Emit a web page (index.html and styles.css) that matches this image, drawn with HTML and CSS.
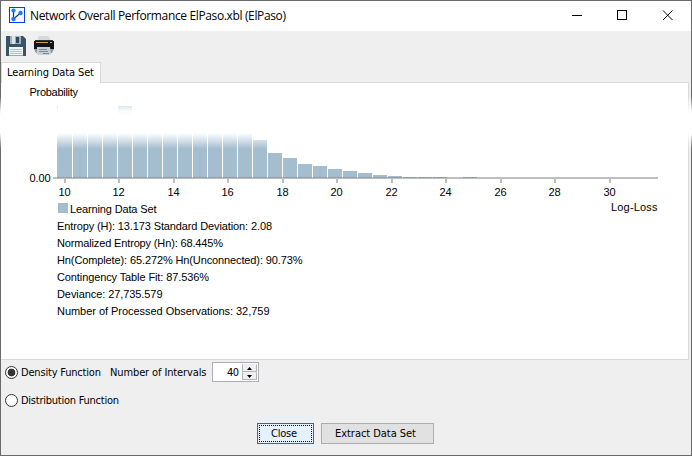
FILE: index.html
```
<!DOCTYPE html>
<html lang="en">
<head>
<meta charset="utf-8">
<title>Network Overall Performance ElPaso.xbl (ElPaso)</title>
<link rel="stylesheet" href="styles.css">
</head>
<body>
<div class="window">
  <header class="titlebar">
    <svg class="app-icon" width="16" height="16" viewBox="0 0 16 16">
      <rect x=".5" y=".5" width="15" height="15" fill="#f4f9ff" stroke="#0b3cf0"/>
      <path d="M4.500 3.500V12L11.500 6" fill="none" stroke="#12307c" stroke-width="1.2"/>
      <circle cx="4.500" cy="3.500" r="2.100" fill="#1680ff"/><circle cx="4.500" cy="12" r="2.200" fill="#1680ff"/><circle cx="11.500" cy="6" r="2.200" fill="#1680ff"/>
    </svg>
    <svg class="title" width="260" height="30"><text x="0" y="19" textLength="256">Network Overall Performance ElPaso.xbl (ElPaso)</text></svg>
    <svg class="controls" width="104" height="12" viewBox="0 0 104 12" fill="none" stroke="#000">
      <path d="M0 5.500H10"/><rect x="45.500" y=".5" width="9" height="9"/><path d="M91 .5L100.500 10M100.500 .5L91 10"/>
    </svg>
  </header>
  <div class="toolbar">
    <svg width="20" height="20" viewBox="0 0 20 20">
      <path d="M0 0H17L20 3V20H0Z" fill="#37536a"/><path d="M4 0H15V8H4Z" fill="#a3b1b9"/><path d="M6 0H9V8H6Z" fill="#dce5e8"/><path d="M10 1H13V7H10Z" fill="#2e485d"/><path d="M3 11H17V20H3Z" fill="#f2f6f8"/><path d="M4 13.500H16M4 15.500H16M4 17.500H16" stroke="#8accea"/><path d="M3 19H17V20H3Z" fill="#75b7d4"/>
    </svg>
    <svg width="20" height="20" viewBox="0 0 20 20">
      <path d="M4 1L6 0H14L16 2V6H4Z" fill="#d5d9dc"/><path d="M1 4H19V8H1Z" fill="#30343a"/><path d="M0 5H20V13H0Z" fill="#111418"/><path d="M2 6.500H14" stroke="#c9a63c"/><path d="M16 6.500H18" stroke="#d4b23c"/><path d="M0 13H20L18 17H2Z" fill="#92999f"/><path d="M3 11H16L17 18L15 19H5L3 18Z" fill="#c6cfd5"/><path d="M5 13.500H13M5 15.500H14M9 17.500H15" stroke="#7d8a94"/>
    </svg>
  </div>
  <div class="tabs"><div class="tab"><svg width="90" height="18"><text class="ui" x="0" y="11" textLength="87">Learning Data Set</text></svg></div></div>
  <main class="panel">
    <svg class="chart" width="687" height="276" viewBox="1 83 687 276">
      <rect x="57" y="106" width="1" height="72" fill="#bbb"/>
      <g fill="#a4bdcf">
        <path d="M58 125h14v53h-14zM73 125h14v53h-14zM88 125h14v53h-14zM103 125h14v53h-14zM118 106h14v72h-14zM133 125h14v53h-14zM148 125h14v53h-14zM163 125h14v53h-14zM178 125h14v53h-14zM193 125h14v53h-14zM208 125h14v53h-14zM223 125h14v53h-14zM238 125h14v53h-14z"/>
        <path d="M253 140h14v38h-14zM268 153h14v25h-14zM283 158h14v20h-14zM298 164h14v14h-14zM313 166h14v12h-14zM328 169h14v9h-14zM343 171h14v7h-14zM358 173h14v5h-14zM373 175h14v3h-14zM388 176h14v2h-14zM403 177h14v1h-14zM418 177h14v1h-14zM433 177h14v1h-14zM463 177h14v1h-14z"/>
      </g>
      <path d="M53 177H658V179H53Z" fill="#808080" fill-opacity=".5"/>
      <path d="M65 179v4M119 179v4M174 179v4M228 179v4M283 179v4M337 179v4M392 179v4M446 179v4M501 179v4M555 179v4M610 179v4" stroke="#bdbdbd" stroke-width="2"/>
      <g class="chart-text">
        <text x="29.500" y="96" textLength="48.500">Probability</text>
        <text x="29.500" y="182" textLength="21">0.00</text>
        <g text-anchor="middle">
          <text x="64.500" y="196">10</text><text x="118.500" y="196">12</text><text x="173.500" y="196">14</text><text x="227.500" y="196">16</text><text x="282.500" y="196">18</text><text x="336.500" y="196">20</text><text x="391.500" y="196">22</text><text x="445.500" y="196">24</text><text x="500.500" y="196">26</text><text x="554.500" y="196">28</text><text x="609.500" y="196">30</text>
        </g>
        <text x="611" y="211" textLength="46.500">Log-Loss</text>
        <rect x="58" y="203" width="10" height="10" fill="#a4bdcf"/>
        <text x="70" y="213" textLength="86.500">Learning Data Set</text>
        <text x="57" y="230" textLength="215">Entropy (H): 13.173 Standard Deviation: 2.08</text>
        <text x="57" y="247" textLength="166">Normalized Entropy (Hn): 68.445%</text>
        <text x="57" y="264" textLength="245.500">Hn(Complete): 65.272% Hn(Unconnected): 90.73%</text>
        <text x="57" y="281" textLength="152">Contingency Table Fit: 87.536%</text>
        <text x="57" y="298" textLength="105.500">Deviance: 27,735.579</text>
        <text x="57" y="315" textLength="212.500">Number of Processed Observations: 32,759</text>
      </g>
    </svg>
  </main>
  <div class="options">
    <div class="row">
      <span class="radio on"></span>
      <svg width="89" height="18"><text class="ui" x="0" y="13" textLength="80">Density Function</text></svg>
      <svg width="102" height="18"><text class="ui" x="0" y="13" textLength="96.500">Number of Intervals</text></svg>
      <div class="spinner">
        <svg class="value" width="28" height="16"><text class="ui" x="13" y="12" textLength="12">40</text></svg>
        <div class="steps">
          <span class="step"><svg width="5" height="3"><path d="M0 3L2.500 0L5 3Z"/></svg></span>
          <span class="step"><svg width="5" height="3"><path d="M0 0L2.500 3L5 0Z"/></svg></span>
        </div>
      </div>
    </div>
    <div class="row">
      <span class="radio"></span>
      <svg width="105" height="18"><text class="ui" x="0" y="13" textLength="98">Distribution Function</text></svg>
    </div>
  </div>
  <footer class="actions">
    <div class="button focused"><svg class="label" width="26" height="17"><text class="ui" x="0" y="12" textLength="26">Close</text></svg></div>
    <div class="button wide"><svg class="label" width="82" height="17"><text class="ui" x="0" y="12" textLength="81">Extract Data Set</text></svg></div>
  </footer>
  <div class="fade"></div>
</div>
</body>
</html>
```
FILE: styles.css
```
* { box-sizing: border-box; }
body { margin: 0; overflow: hidden; }
svg { display: block; flex: none; overflow: visible; }
.window {
  position: relative;
  width: 692px;
  height: 456px;
  border: 1px solid #6a6a6a;
  background: #efefef;
  display: flex;
  flex-direction: column;
}
.titlebar {
  height: 30px;
  background: #fff;
  display: flex;
  align-items: center;
  padding-left: 8px;
}
.app-icon { margin-top: -2px; }
.title { margin-left: 5px; font: 12px "Open Sans", "Noto Sans", sans-serif; }
.controls { margin: 0 0 0 282px; }
.toolbar { height: 31px; display: flex; gap: 8px; padding: 5px 5px 0; }
.tabs { height: 20px; display: flex; }
.tab {
  width: 100px;
  height: 21px;
  background: #fff;
  border: 1px solid #d9d9d9;
  border-bottom: 0;
  padding: 2px 0 0 5px;
  position: relative;
}
.ui { font: 11px "DejaVu Sans Condensed", "DejaVu Sans", sans-serif; font-stretch: condensed; }
.panel {
  width: 688px;
  height: 278px;
  background: #fff;
  border: 1px solid #d9d9d9;
  border-left: 0;
}
.chart-text { font: 11px "Liberation Sans", Arial, sans-serif; }
.options { padding: 1px 0 0 4px; }
.row { display: flex; align-items: center; height: 22px; }
.row + .row { height: 34px; }
.radio {
  width: 13px;
  height: 13px;
  border: 1px solid #333;
  border-radius: 50%;
  background: #fff;
  margin-right: 3px;
  flex: none;
}
.radio.on { background: radial-gradient(circle, #333 0 3.500px, #fff 4.200px); }
.spinner {
  width: 47px;
  height: 20px;
  border: 1px solid #abadb3;
  background: #fff;
  display: flex;
  padding: 1px;
}
.steps { display: flex; flex-direction: column; width: 15px; }
.step {
  height: 8px;
  background: #efefef;
  border: 1px solid #b4b4b4;
  border-top-color: #efefef;
  display: flex;
  align-items: center;
  justify-content: center;
}
.actions { display: flex; gap: 7px; padding: 6px 0 0 256px; }
.button {
  width: 57px;
  height: 21px;
  border: 1px solid #adadad;
  background: #e1e1e1;
  display: flex;
  align-items: center;
  justify-content: center;
}
.label { margin-right: 3px; }
.button.wide { width: 113px; }
.button.focused {
  border-color: #0078d7;
  background: #e5f1fb;
  outline: 1px dotted #000;
  outline-offset: -3px;
}
.fade {
  position: absolute;
  left: -1px;
  top: 95px;
  width: 692px;
  height: 55px;
  background: linear-gradient(transparent 0, #fffffff0 15px, #fff 20px, #fff 37px, transparent 53px);
}
```
